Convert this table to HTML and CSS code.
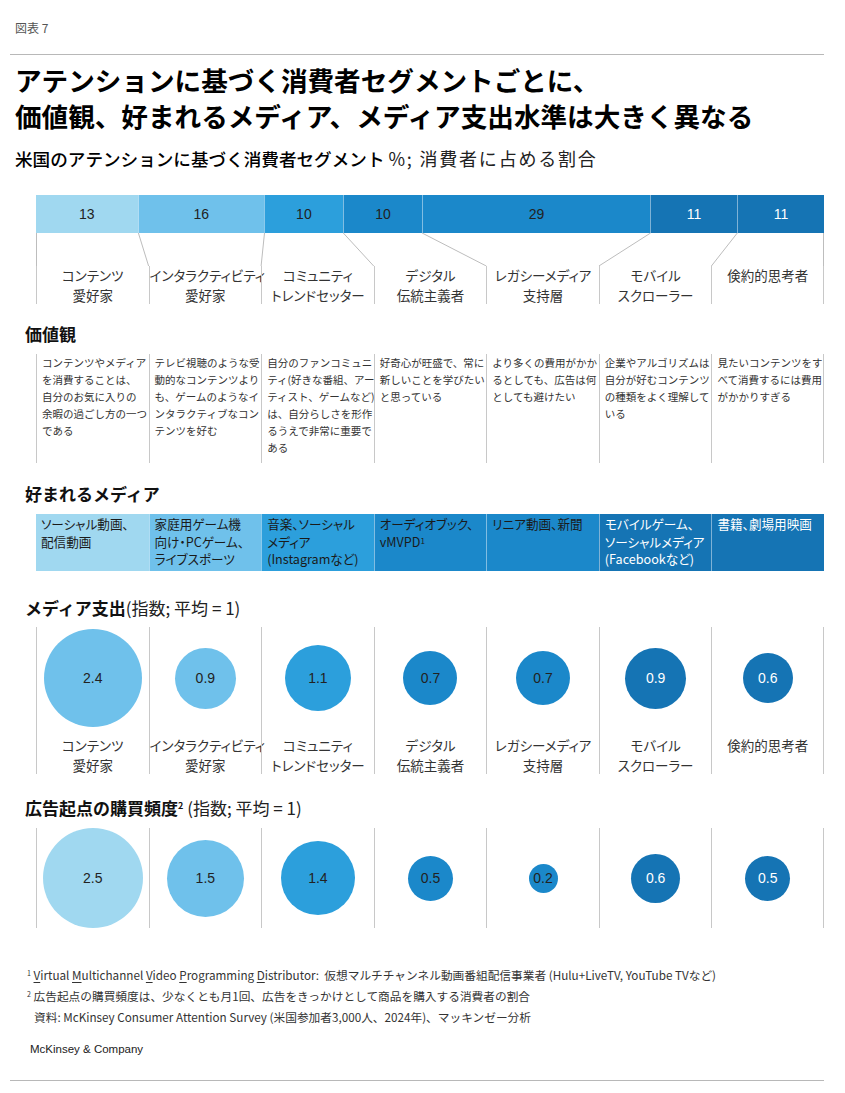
FILE: index.html
```html
<!DOCTYPE html>
<html lang="ja">
<head>
<meta charset="utf-8">
<title>図表 7</title>
<link rel="stylesheet" href="styles.css">
</head>
<body>
<div class="page">
  <div class="fig-label">図表 7</div>
  <div class="rule"></div>
  <h1 class="title">アテンションに基づく消費者セグメントごとに、<br>価値観、好まれるメディア、メディア支出水準は大きく異なる</h1>
  <p class="subtitle"><span class="sub-strong">米国のアテンションに基づく消費者セグメント</span> <span class="sub-light">%; 消費者に占める割合</span></p>

  <div class="chart bar-chart">
    <div class="bar">
      <div class="seg c1" style="flex:13">13</div>
      <div class="seg c2" style="flex:16">16</div>
      <div class="seg c3" style="flex:10">10</div>
      <div class="seg c4" style="flex:10">10</div>
      <div class="seg c4" style="flex:29">29</div>
      <div class="seg c6" style="flex:11">11</div>
      <div class="seg c6" style="flex:11">11</div>
    </div>
    <svg class="connectors" width="788" height="33" viewBox="0 0 788 33">
      <line x1="0.5" y1="0" x2="0.5" y2="33"/>
      <line x1="102.4" y1="0" x2="112.6" y2="33"/>
      <line x1="228.5" y1="0" x2="225.1" y2="33"/>
      <line x1="307.3" y1="0" x2="337.7" y2="33"/>
      <line x1="386.1" y1="0" x2="450.3" y2="33"/>
      <line x1="614.6" y1="0" x2="562.9" y2="33"/>
      <line x1="701.3" y1="0" x2="675.4" y2="33"/>
      <line x1="787.5" y1="0" x2="787.5" y2="33"/>
    </svg>
    <div class="cols seg-labels">
      <div class="col">コンテンツ<br>愛好家</div>
      <div class="col">インタラクティビティ<br>愛好家</div>
      <div class="col">コミュニティ<br>トレンドセッター</div>
      <div class="col">デジタル<br>伝統主義者</div>
      <div class="col">レガシーメディア<br>支持層</div>
      <div class="col">モバイル<br>スクローラー</div>
      <div class="col">倹約的思考者</div>
    </div>
  </div>

  <h2 class="section-head head-values">価値観</h2>
  <div class="chart block-gap">
    <div class="cols values">
      <div class="col">コンテンツやメディア<br>を消費することは、<br>自分のお気に入りの<br>余暇の過ごし方の一つ<br>である</div>
      <div class="col">テレビ視聴のような受<br>動的なコンテンツより<br>も、ゲームのようなイ<br>ンタラクティブなコン<br>テンツを好む</div>
      <div class="col">自分のファンコミュニ<br>ティ(好きな番組、アー<br>ティスト、ゲームなど)<br>は、自分らしさを形作<br>るうえで非常に重要で<br>ある</div>
      <div class="col">好奇心が旺盛で、常に<br>新しいことを学びたい<br>と思っている</div>
      <div class="col">より多くの費用がかか<br>るとしても、広告は何<br>としても避けたい</div>
      <div class="col">企業やアルゴリズムは<br>自分が好むコンテンツ<br>の種類をよく理解して<br>いる</div>
      <div class="col">見たいコンテンツをす<br>べて消費するには費用<br>がかかりすぎる</div>
    </div>
  </div>

  <h2 class="section-head head-media">好まれるメディア</h2>
  <div class="chart block-gap">
    <div class="media">
      <div class="box c1">ソーシャル動画、<br>配信動画</div>
      <div class="box c2">家庭用ゲーム機<br>向け・PCゲーム、<br>ライブスポーツ</div>
      <div class="box c3">音楽、ソーシャル<br>メディア<br>(Instagramなど)</div>
      <div class="box c4">オーディオブック、<br>vMVPD<sup>1</sup></div>
      <div class="box c4">リニア動画、新聞</div>
      <div class="box c6">モバイルゲーム、<br>ソーシャルメディア<br>(Facebookなど)</div>
      <div class="box c6">書籍、劇場用映画</div>
    </div>
  </div>

  <h2 class="section-head head-spend">メディア支出<span class="head-light">(指数; 平均 = 1)</span></h2>
  <div class="chart block-gap-s">
    <div class="cols circles spend">
      <div class="col"><div class="circle-area"><div class="circle c2" style="width:98px;height:98px">2.4</div></div><div class="circle-label">コンテンツ<br>愛好家</div></div>
      <div class="col"><div class="circle-area"><div class="circle c2" style="width:61px;height:61px">0.9</div></div><div class="circle-label">インタラクティビティ<br>愛好家</div></div>
      <div class="col"><div class="circle-area"><div class="circle c3" style="width:66px;height:66px">1.1</div></div><div class="circle-label">コミュニティ<br>トレンドセッター</div></div>
      <div class="col"><div class="circle-area"><div class="circle c4" style="width:54px;height:54px">0.7</div></div><div class="circle-label">デジタル<br>伝統主義者</div></div>
      <div class="col"><div class="circle-area"><div class="circle c4" style="width:54px;height:54px">0.7</div></div><div class="circle-label">レガシーメディア<br>支持層</div></div>
      <div class="col"><div class="circle-area"><div class="circle c6" style="width:61px;height:61px">0.9</div></div><div class="circle-label">モバイル<br>スクローラー</div></div>
      <div class="col"><div class="circle-area"><div class="circle c6" style="width:50px;height:50px">0.6</div></div><div class="circle-label">倹約的思考者</div></div>
    </div>
  </div>

  <h2 class="section-head head-purchase">広告起点の購買頻度<sup>2</sup> <span class="head-light">(指数; 平均 = 1)</span></h2>
  <div class="chart block-gap">
    <div class="cols circles purchase">
      <div class="col"><div class="circle-area"><div class="circle c1" style="width:100px;height:100px">2.5</div></div></div>
      <div class="col"><div class="circle-area"><div class="circle c2" style="width:77px;height:77px">1.5</div></div></div>
      <div class="col"><div class="circle-area"><div class="circle c3" style="width:74px;height:74px">1.4</div></div></div>
      <div class="col"><div class="circle-area"><div class="circle c4" style="width:45px;height:45px">0.5</div></div></div>
      <div class="col"><div class="circle-area"><div class="circle c4" style="width:29px;height:29px">0.2</div></div></div>
      <div class="col"><div class="circle-area"><div class="circle c6" style="width:49px;height:49px">0.6</div></div></div>
      <div class="col"><div class="circle-area"><div class="circle c6" style="width:45px;height:45px">0.5</div></div></div>
    </div>
  </div>

  <div class="footnotes">
    <p><sup>1</sup> <u>V</u>irtual <u>M</u>ultichannel <u>V</u>ideo <u>P</u>rogramming <u>D</u>istributor:&nbsp; 仮想マルチチャンネル動画番組配信事業者 (Hulu+LiveTV, YouTube TVなど)</p>
    <p><sup>2</sup> 広告起点の購買頻度は、少なくとも月1回、広告をきっかけとして商品を購入する消費者の割合</p>
    <p class="source">資料: McKinsey Consumer Attention Survey (米国参加者3,000人、2024年)、マッキンゼー分析</p>
  </div>
  <div class="brand">McKinsey &amp; Company</div>
  <div class="rule bottom-rule"></div>
</div>
</body>
</html>
```

FILE: styles.css
```css
* { box-sizing: border-box; margin: 0; padding: 0; }
body {
  margin: 0;
  background: #fff;
  font-family: "Noto Sans CJK JP", "Noto Sans", sans-serif;
  color: #222;
}
.page { width: 845px; padding: 0 21px 0 10px; }

.fig-label { padding: 20px 0 0 5px; font-size: 12px; line-height: 16px; color: #555; }
.rule { height: 1px; background: #b8b8b8; margin-top: 18px; }

.title {
  margin-top: 7px;
  padding-left: 5px;
  font-size: 26.6px;
  line-height: 36px;
  font-weight: 700;
  color: #000;
}
.subtitle {
  margin-top: 12px;
  padding-left: 5px;
  font-size: 17.6px;
  line-height: 24px;
  font-weight: 400;
  color: #222;
}
.sub-strong { font-weight: 500; color: #000; }
.sub-light { font-size: 18px; letter-spacing: 1.8px; color: #222; }

.chart { margin-left: 26px; width: 788px; }
.bar-chart { margin-top: 24px; }
.block-gap { margin-top: 9px; }
.block-gap-s { margin-top: 8px; }

.bar { display: flex; height: 38px; }
.seg {
  display: flex;
  align-items: center;
  justify-content: center;
  font-family: "Liberation Sans", Arial, sans-serif;
  font-size: 14px;
  color: #222;
}
.seg + .seg { border-left: 1px solid rgba(255, 255, 255, 0.45); }

.c1 { background: #a0d8f0; color: #222; }
.c2 { background: #6fc1eb; color: #222; }
.c3 { background: #2c9fdc; color: #222; }
.c4 { background: #1b88ca; color: #222; }
.c6 { background: #1574b4; color: #fff; }

.connectors { display: block; }
.connectors line { stroke: #bdbdbd; stroke-width: 1; }

.cols { display: grid; grid-template-columns: repeat(7, 1fr); }
.cols > .col { border-left: 1px solid #c8c8c8; min-width: 0; }
.cols > .col:last-child { border-right: 1px solid #c8c8c8; }

.seg-labels .col {
  height: 38px;
  text-align: center;
  font-size: 13.5px;
  line-height: 19.5px;
  color: #333;
  white-space: nowrap;
  font-feature-settings: "palt";
}

.section-head {
  margin-left: 15px;
  font-size: 17px;
  line-height: 22px;
  font-weight: 700;
  color: #111;
}
.section-head sup { font-size: 9px; vertical-align: top; position: relative; top: -2px; }
.head-light { font-weight: 400; color: #222; }
.head-values { margin-top: 19px; }
.head-media { margin-top: 20px; }
.head-spend { margin-top: 26px; }
.head-purchase { margin-top: 23px; }

.values .col {
  height: 109px;
  padding: 0 2px 0 5px;
  font-size: 10.5px;
  line-height: 17px;
  color: #333;
  white-space: nowrap;
}

.media { display: grid; grid-template-columns: repeat(7, 1fr); }
.media .box {
  height: 57px;
  padding: 1px 2px 0 5px;
  font-size: 12.6px;
  line-height: 17.5px;
  white-space: nowrap;
  font-feature-settings: "palt";
  overflow: hidden;
}
.media .box + .box { border-left: 1px solid rgba(255, 255, 255, 0.45); }
.media .box.c1, .media .box.c2, .media .box.c3, .media .box.c4 { color: #1a1a1a; }
.media sup { font-size: 8px; vertical-align: top; position: relative; top: -1px; }

.circles.spend .col { height: 147px; }
.circles.purchase .col { height: 100px; }
.circle-area {
  height: 102px;
  display: flex;
  align-items: center;
  justify-content: center;
}
.purchase .circle-area { height: 100px; }
.circle {
  border-radius: 50%;
  display: flex;
  align-items: center;
  justify-content: center;
  font-family: "Liberation Sans", Arial, sans-serif;
  font-size: 14px;
  flex: none;
}
.circle-label {
  margin-top: 7px;
  text-align: center;
  font-size: 13.5px;
  line-height: 19.5px;
  color: #333;
  white-space: nowrap;
  font-feature-settings: "palt";
}

.footnotes {
  margin-top: 36px;
  padding-left: 17px;
  font-size: 11.7px;
  line-height: 21px;
  color: #333;
}
.footnotes sup { font-size: 7px; vertical-align: top; position: relative; top: -1px; }
.footnotes u { text-decoration-thickness: 1px; text-underline-offset: 2px; }
.source { padding-left: 7px; }

.brand {
  margin-top: 14px;
  padding-left: 20px;
  font-family: "Liberation Sans", Arial, sans-serif;
  font-size: 11.5px;
  line-height: 16px;
  color: #222;
}
.bottom-rule { margin-top: 23px; }
```
